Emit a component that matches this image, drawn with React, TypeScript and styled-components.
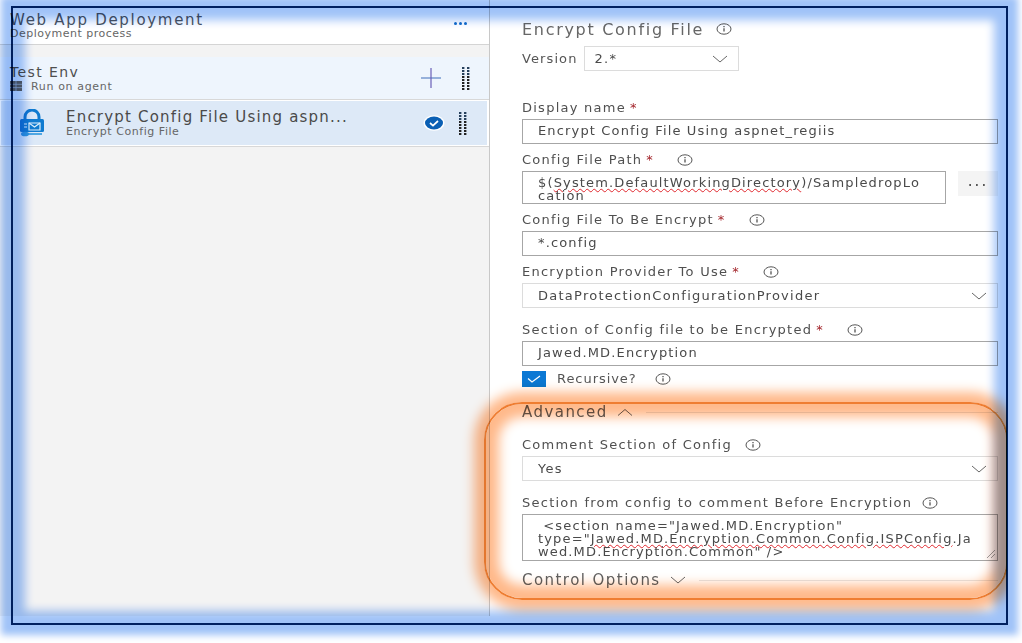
import React from "react";
import styled, {createGlobalStyle} from "styled-components";

const GlobalStyle = createGlobalStyle`
  html, body {
    margin: 0;
    padding: 0;
    background: #fff;
  }
`;

const Shot = styled.div`
  position: relative;
  width: 1022px;
  height: 643px;
  overflow: hidden;
  background: #fff;
  font-family: "DejaVu Sans", "Open Sans", sans-serif;
  color: #555;
`;

const Screen = styled.div`
  display: flex;
  height: 643px;
  filter: blur(0.4px);
`;

const LeftPanel = styled.div`
  width: 489px;
  height: 616px;
  background: #f3f3f3;
  border-right: 1px solid #c8c8c8;
`;

const DeployHeader = styled.div`
  display: flex;
  justify-content: space-between;
  height: 45px;
  box-sizing: border-box;
  padding: 12px 22px 0 10px;
  background: #fff;
  border-bottom: 1px solid #d4d4d4;
`;

const DeployTitle = styled.div`
  font-size: 15px;
  line-height: 16px;
  letter-spacing: 1.7px;
  color: #4c5563;
`;

const DeploySub = styled.div`
  font-size: 11px;
  line-height: 12px;
  letter-spacing: 0.5px;
  color: #666;
`;

const MoreDots = styled.div`
  display: flex;
  gap: 2px;
  margin: 10px 0 0;
  span {
    width: 3px;
    height: 3px;
    border-radius: 50%;
    background: #0f6cc8;
  }
`;

const EnvRow = styled.div`
  display: flex;
  align-items: center;
  height: 42px;
  margin-top: 12px;
  padding: 0 18px 0 10px;
  background: #eef5fd;
  border-bottom: 1px solid #d8d8d8;
`;

const RowText = styled.div`
  flex: 1;
`;

const EnvTitle = styled.div`
  font-size: 14px;
  line-height: 16px;
  letter-spacing: 1.4px;
  color: #4f4f4f;
`;

const AgentLine = styled.div`
  display: flex;
  align-items: center;
  gap: 9px;
  font-size: 11px;
  line-height: 13px;
  letter-spacing: 0.65px;
  color: #666;
`;

const TaskRow = styled.div`
  display: flex;
  align-items: center;
  height: 44px;
  padding: 0 19px 0 17px;
  background: #dde9f7;
  border: solid #fff;
  border-width: 1px 2px 1px 1px;
  box-shadow: 0 1px 0 #d8d8d8;
`;

const TaskText = styled(RowText)`
  margin-left: 20px;
`;

const TaskTitle = styled.div`
  font-size: 15px;
  line-height: 17px;
  letter-spacing: 1.2px;
  color: #4a4a4a;
`;

const TaskSub = styled.div`
  font-size: 11px;
  line-height: 12px;
  letter-spacing: 0.55px;
  color: #666;
`;

const Gripper = styled.svg`
  flex: none;
  display: block;
`;

const RightPanel = styled.div`
  flex: 1;
  box-sizing: border-box;
  padding: 19px 24px 0 32px;
`;

const PaneHeading = styled.div`
  display: flex;
  align-items: center;
  gap: 12px;
  height: 20px;
  font-size: 16px;
  letter-spacing: 1.7px;
  color: #666;
`;

const VersionRow = styled.div`
  display: flex;
  align-items: center;
  gap: 6px;
  margin: 7px 0 28px;
  font-size: 13px;
  letter-spacing: 1.1px;
`;

const Field = styled.div<{$gap?: number}>`
  margin-bottom: ${(p) => p.$gap ?? 5}px;
`;

const FieldLabel = styled.div`
  display: flex;
  align-items: center;
  height: 17px;
  margin-bottom: 3px;
  font-size: 13px;
  letter-spacing: 1.25px;
  color: #505050;
  white-space: pre;
`;

const Required = styled.span`
  margin-left: 4px;
  color: #a4262c;
`;

const LabelInfo = styled.span<{$gap?: number}>`
  display: flex;
  margin-left: ${(p) => p.$gap ?? 23}px;
`;

const TextBox = styled.div<{$h?: number; $w?: number; $multi?: boolean}>`
  box-sizing: border-box;
  width: ${(p) => (p.$w ? `${p.$w}px` : "100%")};
  height: ${(p) => p.$h ?? 25}px;
  padding: ${(p) => (p.$multi ? 4 : 3)}px 18px 0 15px;
  border: 1px solid #a6a6a6;
  font-size: 13px;
  line-height: ${(p) => (p.$multi ? 13 : 16)}px;
  letter-spacing: 1.15px;
  color: #4a4a4a;
  word-break: break-all;
`;

const SelectBox = styled.div<{$w?: number; $indent?: number}>`
  display: flex;
  align-items: center;
  justify-content: space-between;
  box-sizing: border-box;
  width: ${(p) => (p.$w ? `${p.$w}px` : "100%")};
  height: 25px;
  padding: 0 10px 0 ${(p) => p.$indent ?? 15}px;
  border: 1px solid #dcdcdc;
  font-size: 13px;
  letter-spacing: 1.25px;
  color: #4a4a4a;
`;

const PathRow = styled.div`
  display: flex;
  gap: 12px;
`;

const DotsButton = styled.div`
  flex: 1;
  height: 25px;
  background: #f4f4f4;
  text-align: center;
  font-size: 15px;
  line-height: 21px;
  letter-spacing: 2px;
  color: #444;
`;

const CheckRow = styled.div`
  display: flex;
  align-items: center;
  height: 17px;
  margin-top: 4px;
  font-size: 13px;
  letter-spacing: 0.95px;
  color: #555;
`;

const CheckBox = styled.div`
  display: flex;
  align-items: center;
  justify-content: center;
  width: 24px;
  height: 16px;
  margin-right: 11px;
  background: #0b78d4;
`;

const Section = styled.div<{$top: number; $bottom: number}>`
  display: flex;
  align-items: center;
  height: 20px;
  margin: ${(p) => p.$top}px 0 ${(p) => p.$bottom}px;
  font-size: 15px;
  letter-spacing: 1.45px;
  color: #606060;
`;

const SectionChevron = styled.span`
  display: flex;
  margin-left: 9px;
`;

const SectionRule = styled.div`
  flex: 1;
  height: 1px;
  margin-left: 13px;
  background: #e6e6e6;
`;

const Spell = styled.span`
  text-decoration: underline wavy #e0282e 1px;
  text-underline-offset: 1px;
`;

const ResizeGrip = styled.svg`
  position: absolute;
  right: 1px;
  bottom: 1px;
`;

const CodeBox = styled(TextBox)`
  position: relative;
`;

const Frame = styled.div`
  position: absolute;
  left: 11px;
  top: 6px;
  width: 993px;
  height: 615px;
  border: 2px solid #002060;
  mix-blend-mode: multiply;
  box-shadow:
    0 0 7px 10px #a0c3f8,
    inset 0 0 10px 12px #a0c3f8;
`;

const Highlight = styled.div`
  position: absolute;
  left: 484px;
  top: 402px;
  width: 520px;
  height: 194px;
  border: 2px solid #ef7d31;
  border-radius: 38px;
  mix-blend-mode: multiply;
  clip-path: inset(-30px 1px -30px -30px);
  box-shadow:
    0 0 12px 10px #ffb98a,
    inset 0 0 12px 13px #ffb98a;
`;

function Info() {
    return (
        <svg width="16" height="12" viewBox="0 0 16 12">
            <ellipse cx="8" cy="6" rx="7" ry="5.2" fill="none" stroke="#555" strokeWidth="1"/>
            <path d="M8 5.2v3.4" stroke="#444" strokeWidth="1.2"/>
            <path d="M8 3v1.3" stroke="#444" strokeWidth="1.2"/>
        </svg>
    );
}

function Chevron({up = false}: {up?: boolean}) {
    return (
        <svg width="16" height="8" viewBox="0 0 16 8">
            <path d={up ? "M1 7.5L8 1.5L15 7.5" : "M1 1L8 7L15 1"} fill="none" stroke="#666" strokeWidth="1"/>
        </svg>
    );
}

function Grip() {
    const dots = [0, 1, 2, 3, 4, 5, 6, 7];
    return (
        <Gripper width="10" height="23" viewBox="0 0 10 23">
            {dots.map((i) => (
                <g key={i} fill={i < 3 ? "#26405c" : "#222"}>
                    <rect x="1" y={i * 3} width="2.4" height="2"/>
                    <rect x="6" y={i * 3} width="2.4" height="2"/>
                </g>
            ))}
        </Gripper>
    );
}

function Plus() {
    return (
        <svg width="22" height="20" viewBox="0 0 22 20" style={{marginRight: 19}}>
            <path d="M1 10h20" stroke="#5b84c4" strokeWidth="1.2"/>
            <path d="M11 0v20" stroke="#6a5fb8" strokeWidth="1.2"/>
        </svg>
    );
}

function ServerIcon() {
    return (
        <svg width="12" height="10" viewBox="0 0 12 10">
            <rect width="12" height="10" fill="#666"/>
            <path d="M0 3.3h12M0 6.6h12M6 0v10" stroke="#b9c6d4" strokeWidth="0.7"/>
        </svg>
    );
}

function LockIcon() {
    return (
        <svg width="28" height="28" viewBox="0 0 28 28">
            <path d="M7 11V8a7 7 0 0 1 14 0v3" fill="none" stroke="#0f7bd0" strokeWidth="3"/>
            <rect x="2" y="10" width="24" height="13" rx="1.5" fill="#0f7bd0"/>
            <path d="M11 14h11v7H11z" fill="none" stroke="#dff0fc" strokeWidth="1.2"/>
            <path d="M11 14l5.5 4 5.5-4" fill="none" stroke="#dff0fc" strokeWidth="1.2"/>
            <path d="M6 15h3M6 18h3" stroke="#dff0fc" strokeWidth="1.2"/>
            <ellipse cx="7" cy="25" rx="4" ry="2.3" fill="#2c96dc"/>
            <path d="M10 25h14" stroke="#2c96dc" strokeWidth="1.6"/>
        </svg>
    );
}

function CheckBadge() {
    return (
        <svg width="22" height="16" viewBox="0 0 22 16" style={{marginRight: 13}}>
            <ellipse cx="11" cy="8" rx="10.5" ry="7.8" fill="#fff"/>
            <ellipse cx="11" cy="8" rx="9" ry="6.4" fill="#0a5fb4"/>
            <path d="M7 8l3 2.6 5-4.6" fill="none" stroke="#fff" strokeWidth="1.7"/>
        </svg>
    );
}

function App() {
    return (
        <Shot>
            <GlobalStyle/>
            <Screen>
                <LeftPanel>
                    <DeployHeader>
                        <div>
                            <DeployTitle>Web App Deployment</DeployTitle>
                            <DeploySub>Deployment process</DeploySub>
                        </div>
                        <MoreDots><span/><span/><span/></MoreDots>
                    </DeployHeader>
                    <EnvRow>
                        <RowText>
                            <EnvTitle>Test Env</EnvTitle>
                            <AgentLine><ServerIcon/>Run on agent</AgentLine>
                        </RowText>
                        <Plus/>
                        <Grip/>
                    </EnvRow>
                    <TaskRow>
                        <LockIcon/>
                        <TaskText>
                            <TaskTitle>Encrypt Config File Using aspn...</TaskTitle>
                            <TaskSub>Encrypt Config File</TaskSub>
                        </TaskText>
                        <CheckBadge/>
                        <Grip/>
                    </TaskRow>
                </LeftPanel>
                <RightPanel>
                    <PaneHeading>Encrypt Config File <Info/></PaneHeading>
                    <VersionRow>
                        Version
                        <SelectBox $w={155} $indent={10}>2.*<Chevron/></SelectBox>
                    </VersionRow>
                    <Field $gap={7}>
                        <FieldLabel>Display name<Required>*</Required></FieldLabel>
                        <TextBox>Encrypt Config File Using aspnet_regiis</TextBox>
                    </Field>
                    <Field $gap={7}>
                        <FieldLabel>Config File Path<Required>*</Required><LabelInfo><Info/></LabelInfo></FieldLabel>
                        <PathRow>
                            <TextBox $w={424} $h={33} $multi>$(<Spell>System.DefaultWorkingDirectory</Spell>)/SampledropLocation</TextBox>
                            <DotsButton>...</DotsButton>
                        </PathRow>
                    </Field>
                    <Field $gap={7}>
                        <FieldLabel>Config File To Be Encrypt<Required>*</Required><LabelInfo><Info/></LabelInfo></FieldLabel>
                        <TextBox>*.config</TextBox>
                    </Field>
                    <Field $gap={13}>
                        <FieldLabel>Encryption Provider To Use<Required>*</Required><LabelInfo><Info/></LabelInfo></FieldLabel>
                        <SelectBox>DataProtectionConfigurationProvider<Chevron/></SelectBox>
                    </Field>
                    <Field $gap={0}>
                        <FieldLabel>Section of Config file to be Encrypted<Required>*</Required><LabelInfo><Info/></LabelInfo></FieldLabel>
                        <TextBox>Jawed.MD.Encryption</TextBox>
                    </Field>
                    <CheckRow>
                        <CheckBox>
                            <svg width="14" height="8" viewBox="0 0 14 8">
                                <path d="M1 3.5L5 7L13 1" fill="none" stroke="#fff" strokeWidth="1.2"/>
                            </svg>
                        </CheckBox>
                        Recursive?
                        <LabelInfo $gap={18}><Info/></LabelInfo>
                    </CheckRow>
                    <Section $top={15} $bottom={14}>
                        Advanced
                        <SectionChevron><Chevron up/></SectionChevron>
                        <SectionRule/>
                    </Section>
                    <Field $gap={13}>
                        <FieldLabel>Comment Section of Config<LabelInfo $gap={13}><Info/></LabelInfo></FieldLabel>
                        <SelectBox>Yes<Chevron/></SelectBox>
                    </Field>
                    <Field $gap={0}>
                        <FieldLabel>Section from config to comment Before Encryption<LabelInfo $gap={10}><Info/></LabelInfo></FieldLabel>
                        <CodeBox $h={47} $multi>
                            {"\u00a0<section name=\"Jawed.MD.Encryption\""}
                            <br/>
                            {"type=\""}
                            <Spell>Jawed.MD.Encryption.Common.Config.ISPConfig</Spell>
                            {".Jawed.MD.Encryption.Common\" />"}
                            <ResizeGrip width="10" height="10" viewBox="0 0 10 10">
                                <path d="M1 9L9 1M5 9L9 5" stroke="#888" strokeWidth="0.8"/>
                            </ResizeGrip>
                        </CodeBox>
                    </Field>
                    <Section $top={9} $bottom={0}>
                        Control Options
                        <SectionChevron><Chevron/></SectionChevron>
                        <SectionRule/>
                    </Section>
                </RightPanel>
            </Screen>
            <Highlight/>
            <Frame/>
        </Shot>
    );
}

export default App;
